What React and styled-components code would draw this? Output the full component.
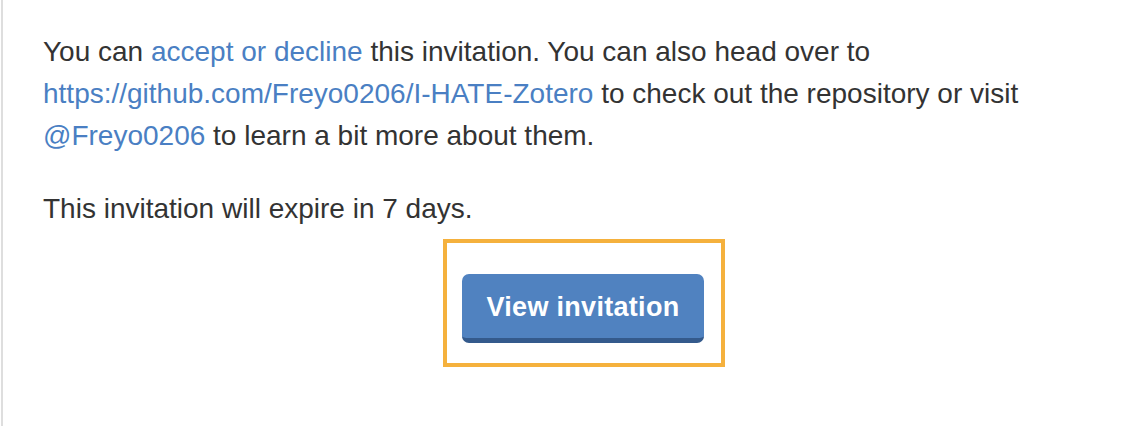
import React from "react";
import styled, { createGlobalStyle } from "styled-components";

const Global = createGlobalStyle`
  html, body { margin: 0; padding: 0; background: #ffffff; }
  body { font-family: "Liberation Sans", Arial, Helvetica, sans-serif; }
`;

const Page = styled.div`
  margin-left: 1px;
  border-left: 2px solid #dedede;
  min-height: 426px;
  box-sizing: border-box;
  padding: 31px 5px 0 40px;
`;

const Paragraph = styled.p`
  margin: 0 0 ${(p) => p.$gap || 0}px 0;
  font-size: 28px;
  line-height: 42px;
  color: #333333;
`;

const Link = styled.a`
  color: #4a7fc3;
  text-decoration: none;
  white-space: nowrap;
`;

const Center = styled.div`
  display: flex;
  justify-content: center;
  margin-top: 9px;
`;

const Highlight = styled.div`
  border: 4px solid #f5b13d;
  padding: 31px 17px 20px 15px;
  display: flex;
`;

const Button = styled.a`
  display: flex;
  align-items: center;
  justify-content: center;
  box-sizing: border-box;
  width: 242px;
  height: 69px;
  padding-top: 2px;
  background: #5082c0;
  border-bottom: 5px solid #345a8c;
  border-radius: 7px;
  color: #ffffff;
  font-weight: bold;
  font-size: 27px;
  letter-spacing: 0.3px;
  text-decoration: none;
`;

export default function App() {
  return (
    <>
      <Global />
      <Page>
        <Paragraph $gap={31}>
          You can <Link href="#">accept or decline</Link> this invitation. You can also head over to{" "}
          <Link href="#">https://github.com/Freyo0206/I-HATE-Zotero</Link> to check out the repository or visit{" "}
          <Link href="#">@Freyo0206</Link> to learn a bit more about them.
        </Paragraph>
        <Paragraph>This invitation will expire in 7 days.</Paragraph>
        <Center>
          <Highlight>
            <Button href="#">View invitation</Button>
          </Highlight>
        </Center>
      </Page>
    </>
  );
}
